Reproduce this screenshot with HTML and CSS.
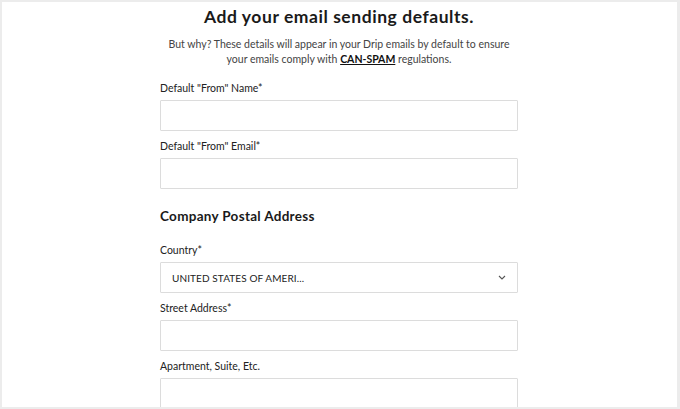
FILE: index.html
```html
<!DOCTYPE html>
<html>
<head>
<meta charset="utf-8">
<link rel="stylesheet" href="styles.css">
</head>
<body>
<div class="frame">
  <main class="form">
    <h1 class="title">Add your email sending defaults.</h1>
    <p class="intro"><span class="intro-line">But why? These details will appear in your Drip emails by default to ensure</span> <span class="intro-line">your emails comply with <a class="link">CAN-SPAM</a> regulations.</span></p>

    <div class="field">
      <label class="label">Default "From" Name*</label>
      <div class="input"></div>
    </div>
    <div class="field">
      <label class="label">Default "From" Email*</label>
      <div class="input"></div>
    </div>

    <h2 class="section">Company Postal Address</h2>

    <div class="field">
      <label class="label">Country*</label>
      <div class="input select">
        <span class="select-value">UNITED STATES OF AMERI...</span>
        <svg class="chevron" width="8" height="5" viewBox="0 0 8 5"><path d="M1 1 L4 4 L7 1" fill="none" stroke="#555" stroke-width="1.1"/></svg>
      </div>
    </div>
    <div class="field">
      <label class="label">Street Address*</label>
      <div class="input"></div>
    </div>
    <div class="field">
      <label class="label">Apartment, Suite, Etc.</label>
      <div class="input"></div>
    </div>
  </main>
</div>
</body>
</html>
```
FILE: styles.css
```css
html, body {
  margin: 0;
  padding: 0;
  background: #ececec;
  height: 100%;
  overflow: hidden;
}
body {
  padding: 2px 3px 2px 2px;
  box-sizing: border-box;
}
.frame {
  background: #fff;
  height: 100%;
  overflow: hidden;
  padding-right: 1px;
  box-sizing: border-box;
  font-family: "Lato", "Noto Sans", sans-serif;
  color: #1a1a1a;
}
.form {
  width: 358px;
  margin: 0 auto;
  display: flex;
  flex-direction: column;
}
.title {
  margin: 4px 0 0;
  font-size: 17.5px;
  line-height: 22px;
  font-weight: 700;
  text-align: center;
  letter-spacing: 0.55px;
}
.intro {
  margin: 9px 0 0;
  padding: 0 8px;
  font-size: 10.5px;
  line-height: 14.5px;
  color: #444;
  text-align: center;
}
.intro-line {
  display: inline-block;
}
.link {
  color: #111;
  font-weight: 700;
  text-decoration: underline;
}
.field {
  display: flex;
  flex-direction: column;
  gap: 5px;
  margin-bottom: 8px;
}
.form > .intro + .field {
  margin-top: 15px;
}
.label {
  font-size: 10.5px;
  line-height: 14px;
  color: #222;
}
.input {
  height: 31px;
  box-sizing: border-box;
  border: 1px solid #dcdcdc;
  border-radius: 1px;
  background: #fff;
}
.select {
  display: flex;
  align-items: center;
  justify-content: space-between;
  padding: 0 11px 0 11px;
}
.select-value {
  font-size: 10px;
  color: #222;
  letter-spacing: 0.1px;
}
.section {
  margin: 10px 0 18px;
  font-size: 13.5px;
  line-height: 18px;
  font-weight: 700;
  letter-spacing: 0.3px;
}
```
